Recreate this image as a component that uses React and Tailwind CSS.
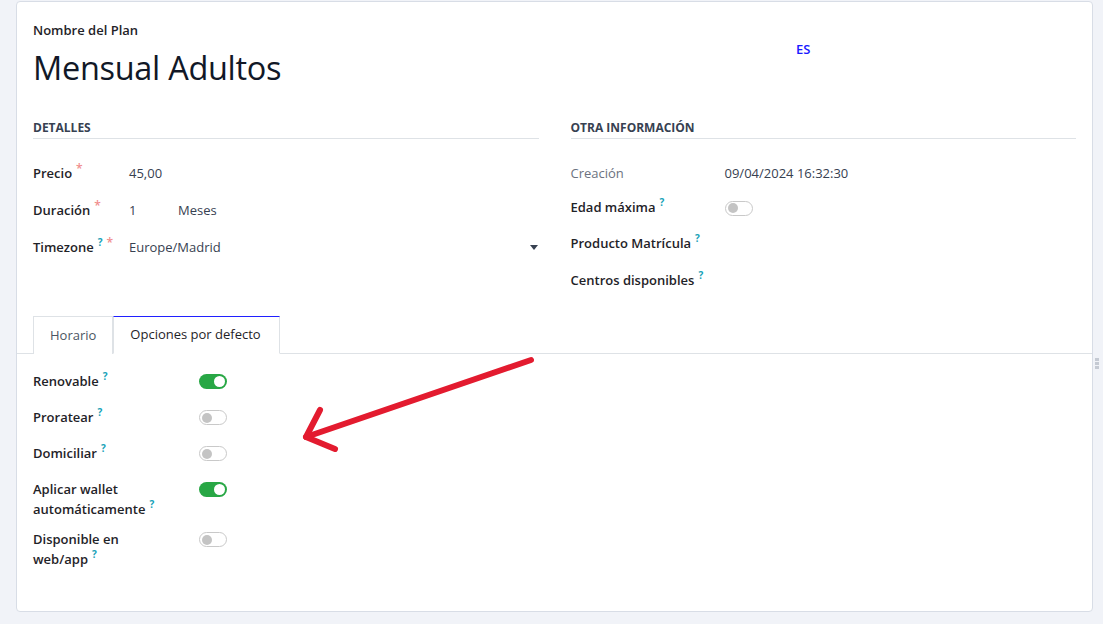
import { useState } from "react";

function Help() {
  return (
    <sup className="ml-1 text-[10px] font-bold text-[#17a2b8] top-[-0.6em]">?</sup>
  );
}

function Req() {
  return <sup className="ml-1 text-[12px] text-[#f08c8c] top-[-0.4em]">*</sup>;
}

function Toggle({ on }) {
  return on ? (
    <div className="w-[28px] h-[15px] rounded-full bg-[#28a745] flex items-center justify-end px-[2px]">
      <div className="w-[11px] h-[11px] rounded-full bg-white" />
    </div>
  ) : (
    <div className="w-[28px] h-[15px] rounded-full bg-white border border-[#c9c9c9] flex items-center px-[2px]">
      <div className="w-[10px] h-[10px] rounded-full bg-[#c4c4c4]" />
    </div>
  );
}

export default function App() {
  const [tab, setTab] = useState(1);

  const options = [
    { label: "Renovable", on: true },
    { label: "Proratear", on: false },
    { label: "Domiciliar", on: false },
    { label: "Aplicar wallet automáticamente", on: true },
    { label: "Disponible en web/app", on: false },
  ];

  return (
    <div
      className="relative w-[1103px] h-[624px] bg-[#f1f3f8] pt-px overflow-hidden"
      style={{ fontFamily: '"Open Sans", "Noto Sans", sans-serif' }}
    >
      {/* Card */}
      <div className="ml-[16px] w-[1077px] h-[611px] bg-white border border-[#d8dde6] rounded-[4px]">
        <div className="px-[16px] pt-[17px]">
          {/* Title */}
          <div className="flex">
            <div className="w-[763px]">
              <div className="text-[13px] font-semibold text-[#1f2328] leading-[22px]">
                Nombre del Plan
              </div>
              <div className="mt-[4px] text-[32.5px] text-[#111827] leading-[46px] tracking-[-0.3px]">
                Mensual Adultos
              </div>
            </div>
            <div className="pt-[21px] text-[13px] font-semibold text-[#1a1aff]">ES</div>
          </div>

          {/* Groups */}
          <div className="mt-[28px] grid grid-cols-2 gap-x-[32px]">
            <div>
              <div className="text-[12px] font-bold text-[#374151] uppercase border-b border-[#dee2e6] pb-[1px] leading-[18px]">
                Detalles
              </div>
              <div className="mt-[16px] flex flex-col text-[13px]">
                <div className="flex items-center h-[37px]">
                  <div className="w-[96px] font-semibold text-[#1f2328]">
                    Precio<Req />
                  </div>
                  <div className="text-[#374151]">45,00</div>
                </div>
                <div className="flex items-center h-[37px]">
                  <div className="w-[96px] font-semibold text-[#1f2328]">
                    Duración<Req />
                  </div>
                  <div className="w-[49px] text-[#374151]">1</div>
                  <div className="text-[#374151]">Meses</div>
                </div>
                <div className="flex items-center h-[37px]">
                  <div className="w-[96px] font-semibold text-[#1f2328]">
                    Timezone<Help /><Req />
                  </div>
                  <div className="flex-1 text-[#374151]">Europe/Madrid</div>
                  <svg width="8" height="5" viewBox="0 0 8 5" className="mr-[1px]">
                    <path d="M0 0 L8 0 L4 5 Z" fill="#374151" />
                  </svg>
                </div>
              </div>
            </div>

            <div>
              <div className="text-[12px] font-bold text-[#374151] uppercase border-b border-[#dee2e6] pb-[1px] leading-[18px]">
                Otra información
              </div>
              <div className="mt-[18px] flex flex-col text-[13px]">
                <div className="flex items-center h-[34px]">
                  <div className="w-[154px] text-[#6b7280]">Creación</div>
                  <div className="text-[#374151]">09/04/2024 16:32:30</div>
                </div>
                <div className="flex items-center h-[34px]">
                  <div className="w-[154px] font-semibold text-[#1f2328]">
                    Edad máxima<Help />
                  </div>
                  <Toggle on={false} />
                </div>
                <div className="flex items-center h-[38px]">
                  <div className="font-semibold text-[#1f2328]">
                    Producto Matrícula<Help />
                  </div>
                </div>
                <div className="flex items-center h-[36px]">
                  <div className="font-semibold text-[#1f2328]">
                    Centros disponibles<Help />
                  </div>
                </div>
              </div>
            </div>
          </div>
        </div>

        {/* Tabs */}
        <div className="mt-[17px] border-b border-[#dee2e6] px-[16px] flex h-[38px]">
          {["Horario", "Opciones por defecto"].map((t, i) => (
            <button
              key={t}
              onClick={() => setTab(i)}
              className={
                i === tab
                  ? "h-[38px] pl-[16px] pr-[18px] text-[13px] text-[#1f2328] bg-white border border-[#dee2e6] border-t-[#2020ff] border-b-white -mb-px"
                  : "h-[38px] px-[16px] text-[13px] text-[#4b5563] bg-white border border-[#dee2e6] border-b-0"
              }
            >
              {t}
            </button>
          ))}
        </div>

        {/* Options */}
        <div className="px-[16px] pt-[17px] flex flex-col text-[13px]">
          {options.map((o) => (
            <div key={o.label} className="flex items-start min-h-[36px] pb-[10px]">
              <div className="w-[166px] pr-[34px] font-semibold text-[#1f2328] leading-[20px]">
                {o.label}
                <Help />
              </div>
              <div className="pt-[3px]">
                <Toggle on={o.on} />
              </div>
            </div>
          ))}
        </div>
      </div>

      {/* Resize handle */}
      <div className="absolute left-[1095px] top-[358px] flex flex-col gap-[1px]">
        <div className="w-[4px] h-[3px] bg-[#c5cad3]" />
        <div className="w-[4px] h-[3px] bg-[#c5cad3]" />
        <div className="w-[4px] h-[3px] bg-[#c5cad3]" />
      </div>

      {/* Red arrow annotation */}
      <svg
        className="absolute left-0 top-0 pointer-events-none"
        width="1103"
        height="624"
        viewBox="0 0 1103 624"
      >
        <g stroke="#e31b2f" strokeWidth="6" strokeLinecap="round" strokeLinejoin="round" fill="none">
          <path d="M531 360 L306 437" />
          <path d="M320 410 L306 437 L335 449" />
        </g>
      </svg>
    </div>
  );
}
